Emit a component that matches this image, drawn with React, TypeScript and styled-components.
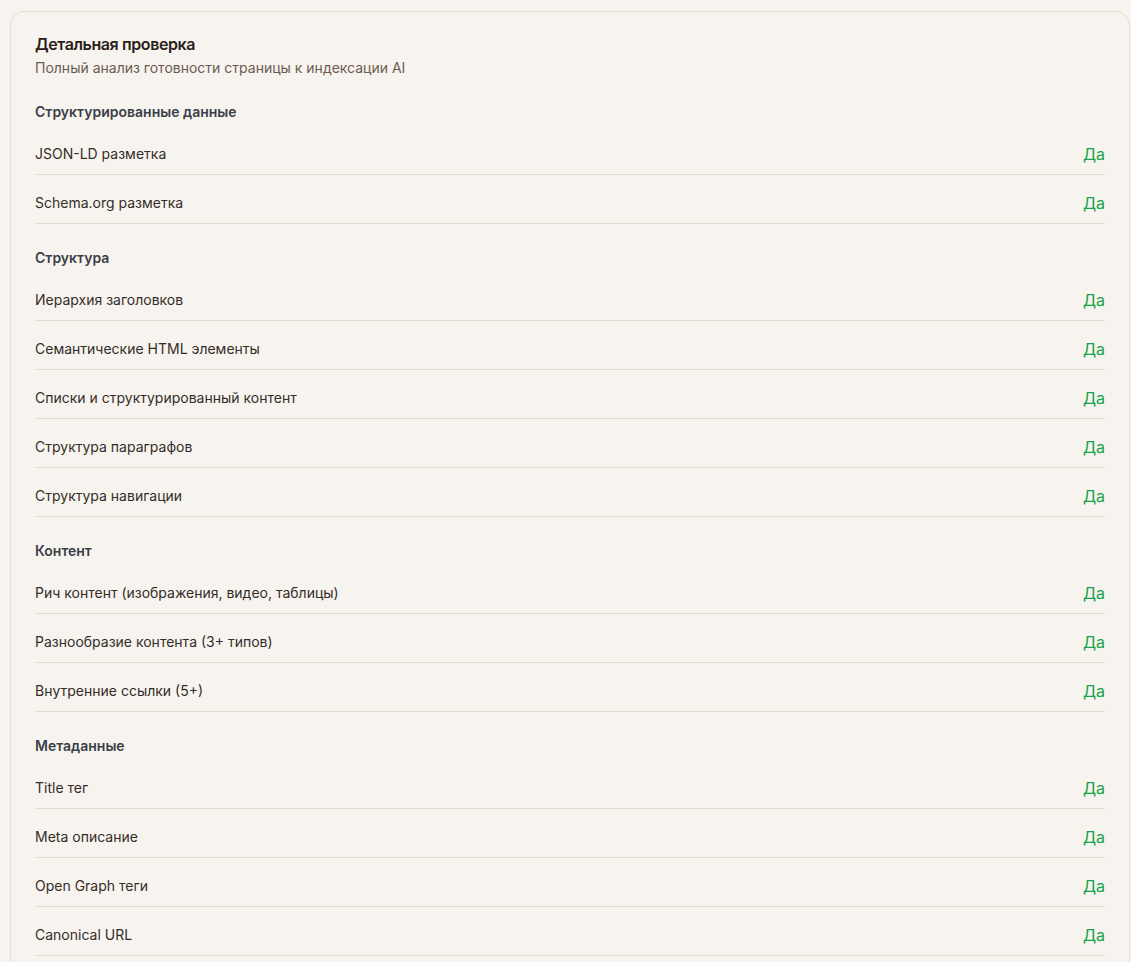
import styled, { createGlobalStyle } from "styled-components"

const GlobalStyle = createGlobalStyle`
  html, body {
    margin: 0;
    padding: 0;
    background: #f7f4ef;
  }

  body {
    font-family: Inter, "Noto Sans", sans-serif;
    -webkit-font-smoothing: antialiased;
  }
`

const Page = styled.div`
  padding: 11px 1px 0 10px;
`

const Card = styled.section`
  background: #f7f4ef;
  border: 1px solid #e6ded3;
  border-radius: 14px;
  padding: 20px 24px 24px;
`

const Header = styled.header`
  margin-bottom: 24px;
`

const Title = styled.h2`
  margin: 0;
  font-size: 16px;
  line-height: 24px;
  font-weight: 600;
  letter-spacing: -0.025em;
  color: #2a201b;
`

const Subtitle = styled.p`
  margin: 2px 0 0;
  font-size: 14px;
  line-height: 20px;
  color: #6b5b4f;
`

const Section = styled.div`
  & + & {
    margin-top: 24px;
  }
`

const SectionTitle = styled.h3`
  margin: 0 0 4px;
  font-size: 14px;
  line-height: 20px;
  font-weight: 600;
  color: #3b3f48;
`

const Row = styled.div`
  display: flex;
  align-items: center;
  justify-content: space-between;
  padding: 16px 0 8px;
  border-bottom: 1px solid #e3d9cc;
`

const Label = styled.span`
  font-size: 14px;
  line-height: 20px;
  color: #352c27;
`

const Value = styled.span<{ $ok: boolean }>`
  font-size: 16px;
  line-height: 24px;
  color: ${(p) => (p.$ok ? "#16a34a" : "#dc2626")};
`

const groups = [
  {
    title: "Структурированные данные",
    items: ["JSON-LD разметка", "Schema.org разметка"],
  },
  {
    title: "Структура",
    items: [
      "Иерархия заголовков",
      "Семантические HTML элементы",
      "Списки и структурированный контент",
      "Структура параграфов",
      "Структура навигации",
    ],
  },
  {
    title: "Контент",
    items: [
      "Рич контент (изображения, видео, таблицы)",
      "Разнообразие контента (3+ типов)",
      "Внутренние ссылки (5+)",
    ],
  },
  {
    title: "Метаданные",
    items: ["Title тег", "Meta описание", "Open Graph теги", "Canonical URL"],
  },
]

export default function App() {
  return (
    <Page>
      <GlobalStyle />
      <Card>
        <Header>
          <Title>Детальная проверка</Title>
          <Subtitle>Полный анализ готовности страницы к индексации AI</Subtitle>
        </Header>
        {groups.map((g) => (
          <Section key={g.title}>
            <SectionTitle>{g.title}</SectionTitle>
            {g.items.map((item) => (
              <Row key={item}>
                <Label>{item}</Label>
                <Value $ok>Да</Value>
              </Row>
            ))}
          </Section>
        ))}
      </Card>
    </Page>
  )
}
